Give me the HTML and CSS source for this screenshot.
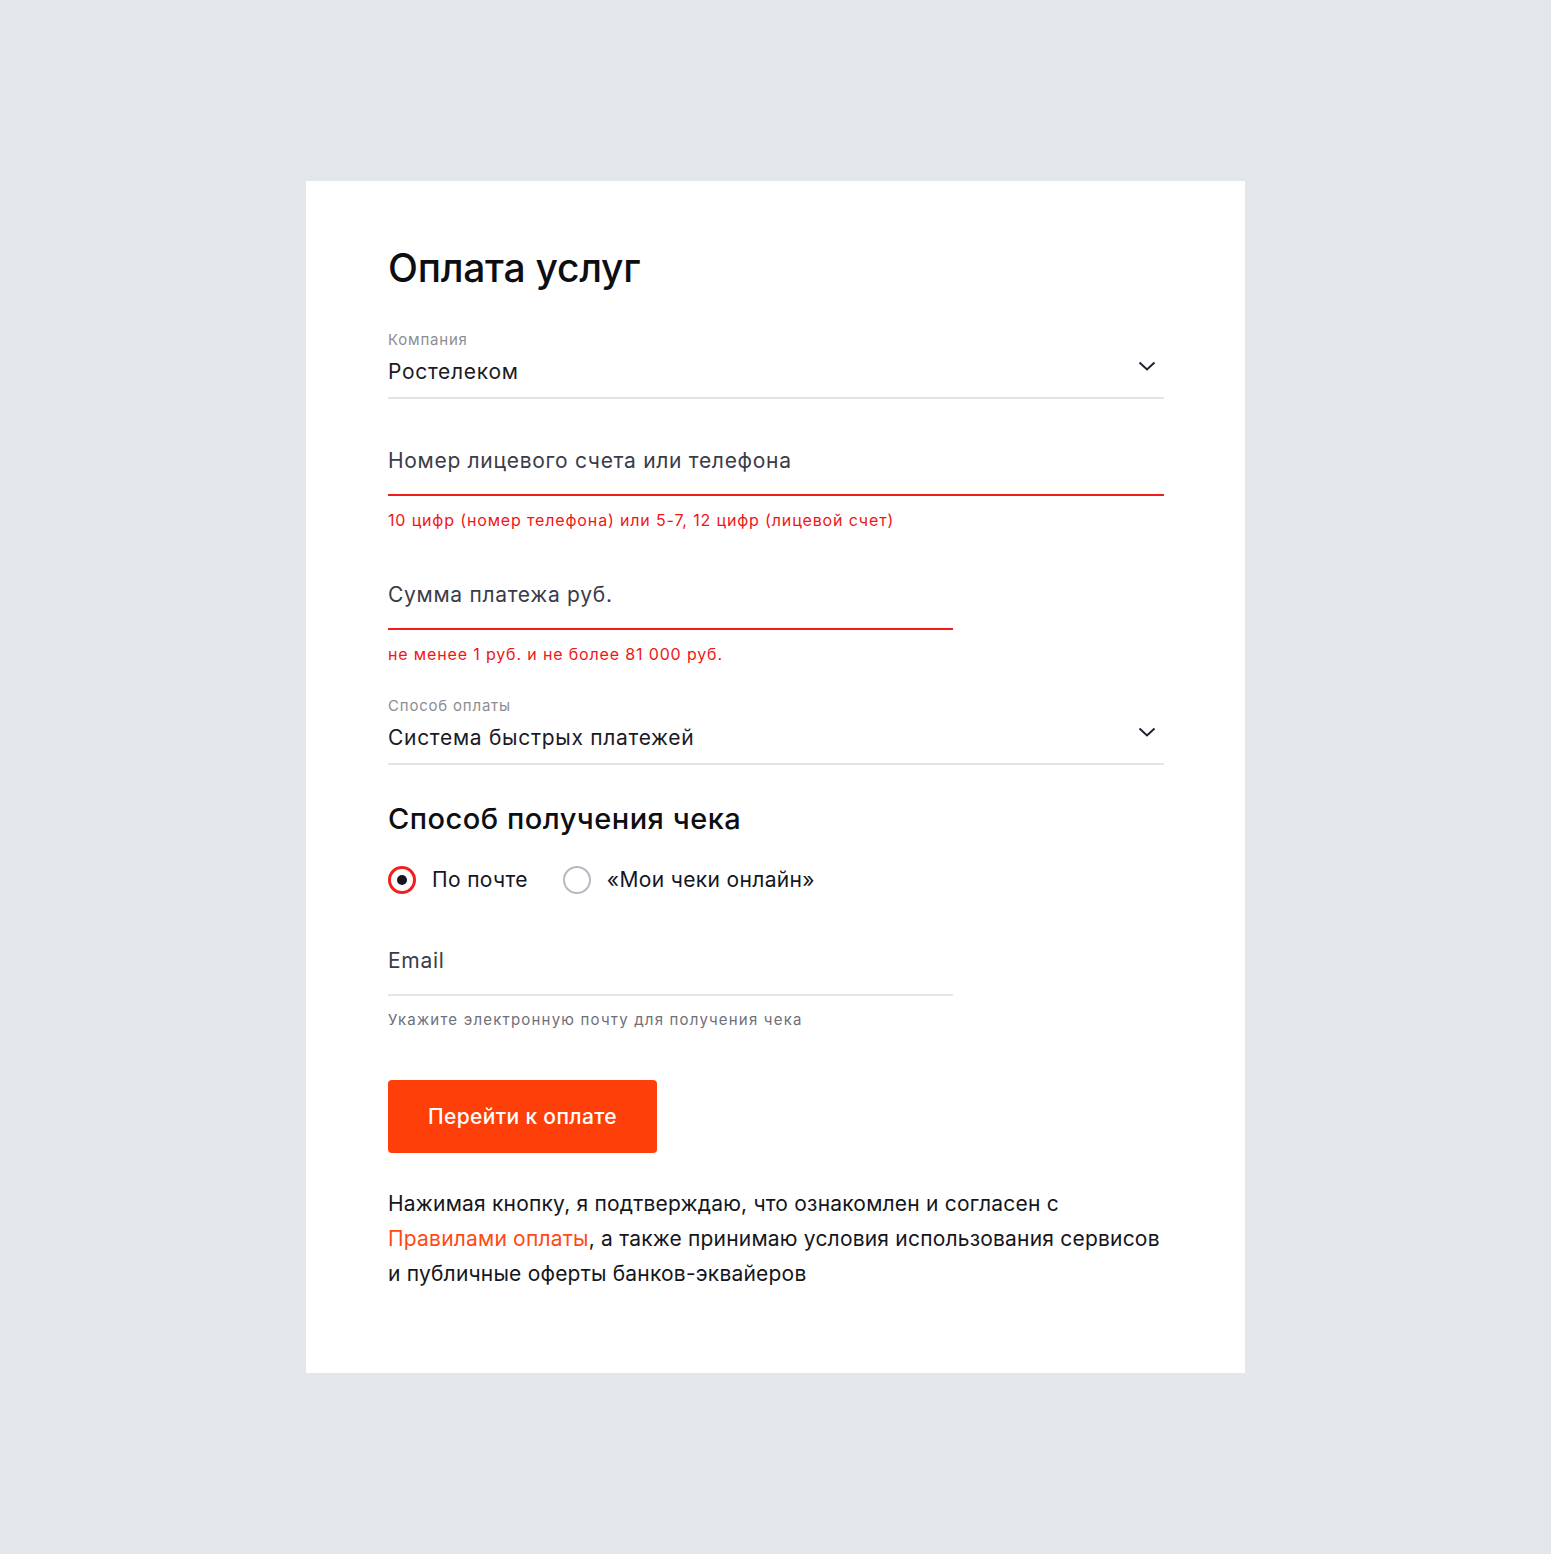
FILE: index.html
```html
<!DOCTYPE html>
<html lang="ru">
<head>
<meta charset="utf-8">
<title>Оплата услуг</title>
<link rel="stylesheet" href="styles.css">
</head>
<body>
<main class="card">
  <h1 class="title">Оплата услуг</h1>

  <div class="select first">
    <div class="select-label">Компания</div>
    <div class="select-value">Ростелеком</div>
    <svg class="chevron" width="18" height="10" viewBox="0 0 18 10"><path d="M1.5 1.5 L9 8.5 L16.5 1.5" fill="none" stroke="#1f2133" stroke-width="2"/></svg>
  </div>

  <div class="input error wide account">
    <div class="input-text">Номер лицевого счета или телефона</div>
  </div>
  <div class="hint error-text">10 цифр (номер телефона) или 5-7, 12 цифр (лицевой счет)</div>

  <div class="input error narrow next">
    <div class="input-text">Сумма платежа руб.</div>
  </div>
  <div class="hint error-text">не менее 1 руб. и не более 81 000 руб.</div>

  <div class="select second">
    <div class="select-label">Способ оплаты</div>
    <div class="select-value">Система быстрых платежей</div>
    <svg class="chevron" width="18" height="10" viewBox="0 0 18 10"><path d="M1.5 1.5 L9 8.5 L16.5 1.5" fill="none" stroke="#1f2133" stroke-width="2"/></svg>
  </div>

  <h2 class="subtitle">Способ получения чека</h2>

  <div class="radios">
    <label class="radio">
      <span class="radio-circle checked"><span class="radio-dot"></span></span>
      <span class="radio-text">По почте</span>
    </label>
    <label class="radio">
      <span class="radio-circle"></span>
      <span class="radio-text">«Мои чеки онлайн»</span>
    </label>
  </div>

  <div class="input narrow email">
    <div class="input-text">Email</div>
  </div>
  <div class="hint grey-text">Укажите электронную почту для получения чека</div>

  <button class="pay-button" type="button">Перейти к оплате</button>

  <p class="agreement">Нажимая кнопку, я подтверждаю, что ознакомлен и согласен с<br><a class="link" href="#">Правилами оплаты</a>, а также принимаю условия использования сервисов<br>и публичные оферты банков-эквайеров</p>
</main>
</body>
</html>
```

FILE: styles.css
```css
* { box-sizing: border-box; }

html, body {
  margin: 0;
  padding: 0;
}

body {
  background: #e3e7eb;
  font-family: Inter, Roboto, "Liberation Sans", Arial, sans-serif;
  color: #15161c;
  min-height: 1554px;
}

.card {
  width: 939px;
  height: 1192px;
  margin: 181px 0 0 306px;
  background: #ffffff;
  padding: 63px 81px 0 82px;
  display: flex;
  flex-direction: column;
  align-items: flex-start;
}

.title {
  margin: 0;
  font-size: 39px;
  line-height: 48px;
  font-weight: 500;
  color: #0d0e12;
  letter-spacing: -0.25px;
}

.select {
  position: relative;
  width: 776px;
  padding-bottom: 10px;
  border-bottom: 2px solid #e4e4e6;
}
.select.first { margin-top: 38px; }
.select.second { margin-top: 32px; }

.select-label {
  font-size: 15px;
  line-height: 20px;
  color: #8c8d94;
  letter-spacing: 0.8px;
}

.select-value {
  margin-top: 7px;
  font-size: 21px;
  line-height: 30px;
  color: #1a1b26;
  letter-spacing: 0.7px;
}

.chevron {
  position: absolute;
  right: 8px;
  top: 31px;
}

.input {
  padding-bottom: 18px;
  border-bottom: 2px solid #e6e6e8;
}
.input.error { border-bottom-color: #f21c1c; }
.input.wide { width: 776px; }
.input.narrow { width: 565px; }
.input.account { margin-top: 47px; }
.input.next { margin-top: 50px; }
.input.email { margin-top: 52px; }

.input-text {
  font-size: 21px;
  line-height: 30px;
  color: #3a3c4a;
  letter-spacing: 0.7px;
}

.hint {
  margin-top: 14px;
  font-size: 16px;
  line-height: 20px;
  letter-spacing: 0.85px;
}
.error-text { color: #f01616; }
.grey-text { color: #6e7079; font-size: 15px; letter-spacing: 1.2px; }

.subtitle {
  margin: 36px 0 0;
  font-size: 29px;
  line-height: 36px;
  font-weight: 500;
  color: #0d0e12;
  letter-spacing: 0.5px;
}

.radios {
  margin-top: 29px;
  display: flex;
  gap: 35px;
  align-items: center;
}

.radio {
  display: flex;
  align-items: center;
  gap: 16px;
  cursor: pointer;
}

.radio-circle {
  width: 28px;
  height: 28px;
  border-radius: 50%;
  border: 2px solid #b8b9c0;
  display: flex;
  align-items: center;
  justify-content: center;
}
.radio-circle.checked { border: 3px solid #f31e1e; }

.radio-dot {
  width: 10px;
  height: 10px;
  border-radius: 50%;
  background: #141624;
}

.radio-text {
  font-size: 21px;
  line-height: 28px;
  color: #15161f;
  letter-spacing: 0.35px;
}

.pay-button {
  margin-top: 50px;
  width: 269px;
  height: 73px;
  border: none;
  border-radius: 4px;
  background: #ff3f0a;
  color: #ffffff;
  font-family: Inter, Roboto, "Liberation Sans", Arial, sans-serif;
  font-size: 21px;
  font-weight: 500;
  letter-spacing: 0.35px;
  cursor: pointer;
}

.agreement {
  margin: 33px 0 0;
  width: 800px;
  font-size: 21px;
  line-height: 35px;
  color: #15161c;
  letter-spacing: 0.2px;
}

.link {
  color: #ff4a14;
  text-decoration: none;
}
```
